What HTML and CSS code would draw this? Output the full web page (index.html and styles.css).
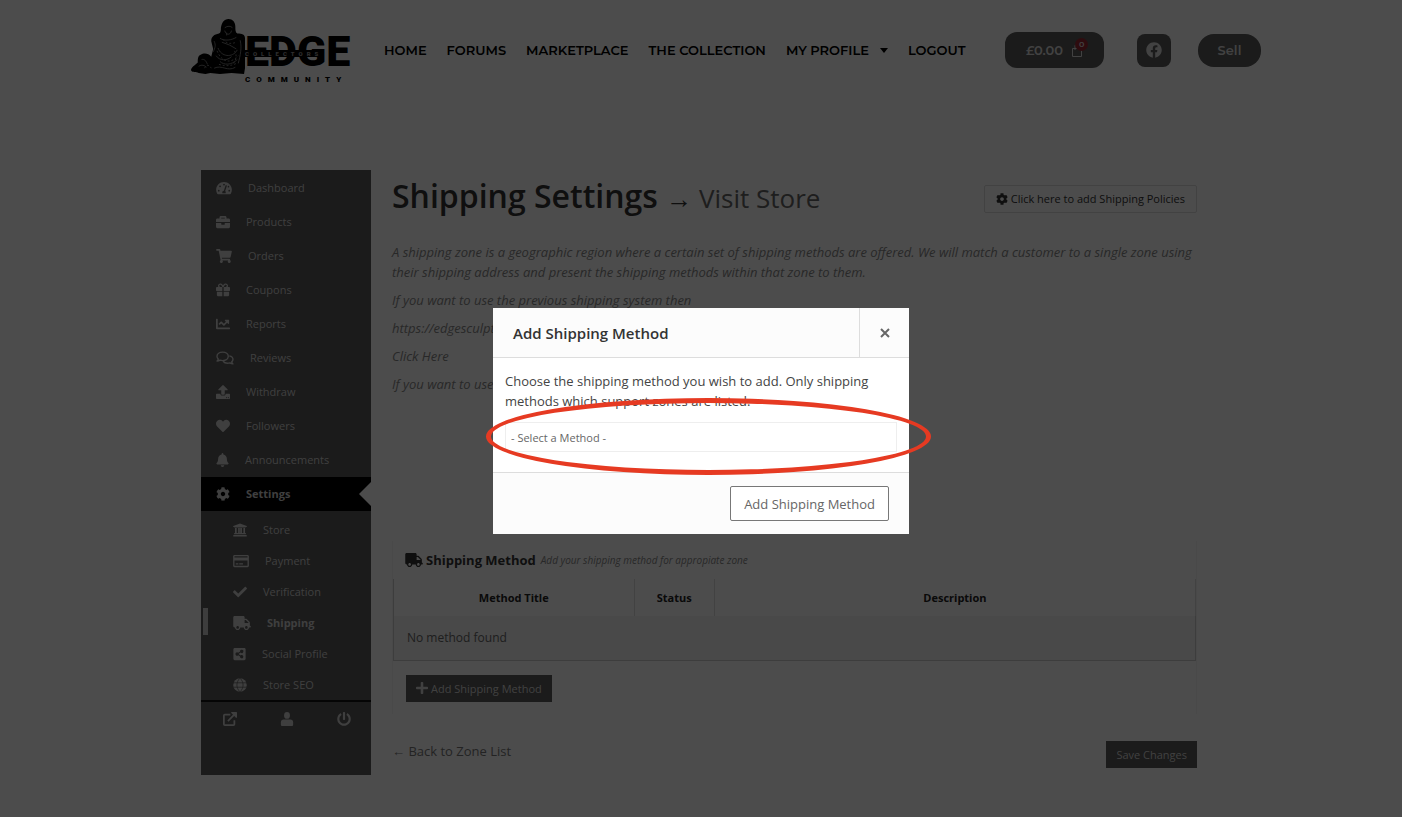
FILE: index.html
```html
<!DOCTYPE html>
<html lang="en">
  <head>
    <meta charset="UTF-8" />
    <meta name="viewport" content="width=device-width, initial-scale=1.0" />
    <link rel="stylesheet" href="styles.css">
    <title>Shipping Settings</title>
  </head>
  <body>
    <!-- icon sprite -->
    <svg class="sprite" aria-hidden="true">
      <symbol id="i-dash" viewBox="0 0 576 512"><path fill-rule="evenodd" d="M288 32C129 32 0 161 0 320c0 53 14 102 39 145 6 10 16 15 28 15h442c12 0 22-5 28-15 25-43 39-92 39-145C576 161 447 32 288 32zM288 96a32 32 0 1 1 0 64 32 32 0 0 1 0-64zM96 384a32 32 0 1 1 0-64 32 32 0 0 1 0 64zM144 224a32 32 0 1 1 0-64 32 32 0 0 1 0 64zM391 185l-61 184c13 12 22 28 22 47 0 12-3 23-9 32H233c-6-9-9-20-9-32 0-34 27-61 60-63l61-184c4-12 18-19 30-15s20 18 16 31zM420 222l15-45a32 32 0 1 1-15 45zM480 384a32 32 0 1 1 0-64 32 32 0 0 1 0 64z"/></symbol>
      <symbol id="i-case" viewBox="0 0 512 512"><path d="M320 336c0 8.840-7.160 16-16 16h-96c-8.840 0-16-7.160-16-16v-48H0v144c0 25.600 22.400 48 48 48h416c25.600 0 48-22.400 48-48V288H320v48zm144-208h-80V80c0-25.600-22.400-48-48-48H176c-25.600 0-48 22.400-48 48v48H48c-25.600 0-48 22.400-48 48v80h512v-80c0-25.600-22.400-48-48-48zm-144 0H192V96h128v32z"/></symbol>
      <symbol id="i-cart" viewBox="0 0 576 512"><path d="M528.120 301.319l47.273-208C578.806 78.301 567.391 64 551.990 64H159.208l-9.166-44.810C147.758 8.021 137.930 0 126.529 0H24C10.745 0 0 10.745 0 24v16c0 13.255 10.745 24 24 24h69.883l70.248 343.435C147.325 417.100 136 435.222 136 456c0 30.928 25.072 56 56 56s56-25.072 56-56c0-15.674-6.447-29.835-16.824-40h209.647C430.447 426.165 424 440.326 424 456c0 30.928 25.072 56 56 56s56-25.072 56-56c0-22.172-12.888-41.332-31.579-50.405l5.517-24.276c3.413-15.018-8.002-29.319-23.403-29.319H218.117l-6.545-32h293.145c11.206 0 20.920-7.754 23.403-18.681z"/></symbol>
      <symbol id="i-gift" viewBox="0 0 512 512"><path fill-rule="evenodd" d="M32 448c0 18 14 32 32 32h168V320H32zM280 480h168c18 0 32-14 32-32V320H280zM480 144h-50c7-12 10-25 10-40 0-48-38-88-86-88-41 0-68 21-98 62-30-41-57-62-98-62-48 0-86 40-86 88 0 15 3 28 10 40H32c-18 0-32 14-32 32v96c0 9 7 16 16 16h216V144h48v144h216c9 0 16-7 16-16v-96c0-18-14-32-32-32zM158 144a40 40 0 0 1 0-80c20 0 33 3 74 80zM354 144h-74c41-77 53-80 74-80a40 40 0 0 1 0 80z"/></symbol>
      <symbol id="i-chart" viewBox="0 0 512 512"><path d="M496 384H64V80c0-8.840-7.160-16-16-16H16C7.160 64 0 71.160 0 80v336c0 17.670 14.330 32 32 32h464c8.840 0 16-7.160 16-16v-32c0-8.840-7.160-16-16-16zM464 96H345.940c-21.380 0-32.090 25.850-16.970 40.970l32.400 32.400L288 242.750l-73.370-73.370c-12.500-12.500-32.760-12.500-45.250 0l-68.690 68.690c-6.250 6.250-6.250 16.380 0 22.630l22.620 22.620c6.250 6.250 16.380 6.250 22.630 0L192 237.250l73.370 73.370c12.500 12.500 32.760 12.500 45.250 0l96-96 32.400 32.400c15.120 15.120 40.970 4.410 40.970-16.970V112c0-8.840-7.150-16-15.990-16z"/></symbol>
      <symbol id="i-chat" viewBox="0 0 640 512"><g fill="none" stroke="currentColor" stroke-width="50" stroke-linejoin="round"><path d="M235 40c-115 0-208 65-208 155 0 40 18 74 46 100-6 28-22 52-44 74 44-2 82-16 112-34 30 10 60 15 94 15 115 0 205-68 205-155S350 40 235 40z"/><path d="M478 178c80 18 134 66 134 128 0 36-18 68-46 92 6 30 22 52 44 74-46-2-82-16-112-36-110 24-204-4-248-62"/></g></symbol>
      <symbol id="i-up" viewBox="0 0 512 512"><path fill-rule="evenodd" d="M296 352h-80c-13 0-24-11-24-24V192h-88c-18 0-27-22-14-34L242 6c7-8 20-8 28 0l152 152c12 12 3 34-14 34h-88v136c0 13-11 24-24 24zM512 344v144c0 13-11 24-24 24H24c-13 0-24-11-24-24V344c0-13 11-24 24-24h136v8c0 31 25 56 56 56h80c31 0 56-25 56-56v-8h136c13 0 24 11 24 24zM388 440a20 20 0 1 0 0 40 20 20 0 0 0 0-40zM452 440a20 20 0 1 0 0 40 20 20 0 0 0 0-40z"/></symbol>
      <symbol id="i-heart" viewBox="0 0 512 512"><path d="M462.300 62.600C407.500 15.900 326 24.300 275.700 76.200L256 96.500l-19.700-20.300C186.100 24.300 104.500 15.900 49.700 62.600c-62.800 53.600-66.100 149.800-9.900 207.900l193.500 199.800c12.500 12.900 32.800 12.900 45.300 0l193.500-199.800c56.300-58.100 53-154.300-9.800-207.900z"/></symbol>
      <symbol id="i-bell" viewBox="0 0 448 512"><path d="M224 512c35.320 0 63.970-28.650 63.970-64H160.030c0 35.350 28.650 64 63.970 64zm215.390-149.710c-19.320-20.760-55.470-51.990-55.470-154.290 0-77.700-54.480-139.900-127.940-155.160V32c0-17.670-14.320-32-31.980-32s-31.980 14.330-31.980 32v20.840C118.560 68.100 64.080 130.300 64.080 208c0 102.300-36.150 133.530-55.470 154.290-6 6.450-8.660 14.160-8.610 21.710.11 16.400 12.980 32 32.100 32h383.800c19.120 0 32-15.600 32.100-32 .05-7.550-2.610-15.270-8.610-21.710z"/></symbol>
      <symbol id="i-cog" viewBox="0 0 512 512"><path d="M487.400 315.700l-42.600-24.600c4.300-23.200 4.300-47 0-70.200l42.600-24.600c4.900-2.800 7.100-8.600 5.500-14-11.100-35.600-30-67.800-54.700-94.600-3.800-4.100-10-5.100-14.800-2.300L380.800 110c-17.900-15.400-38.500-27.300-60.800-35.100V25.800c0-5.600-3.900-10.500-9.400-11.700-36.700-8.200-74.300-7.800-109.200 0-5.500 1.200-9.400 6.100-9.400 11.700V75c-22.200 7.900-42.800 19.800-60.800 35.100L88.700 85.500c-4.900-2.800-11-1.900-14.800 2.300-24.700 26.700-43.600 58.900-54.700 94.600-1.700 5.400.6 11.200 5.500 14L67.300 221c-4.300 23.200-4.300 47 0 70.200l-42.600 24.600c-4.900 2.800-7.100 8.600-5.500 14 11.100 35.600 30 67.800 54.700 94.600 3.800 4.100 10 5.100 14.800 2.300l42.600-24.600c17.900 15.400 38.500 27.300 60.800 35.100v49.200c0 5.600 3.900 10.500 9.400 11.700 36.700 8.200 74.300 7.800 109.200 0 5.500-1.200 9.400-6.100 9.400-11.700v-49.200c22.200-7.900 42.800-19.800 60.800-35.100l42.600 24.600c4.900 2.800 11 1.900 14.800-2.300 24.700-26.700 43.600-58.900 54.700-94.600 1.500-5.500-.7-11.300-5.600-14.100zM256 336c-44.100 0-80-35.900-80-80s35.900-80 80-80 80 35.900 80 80-35.900 80-80 80z"/></symbol>
      <symbol id="i-bank" viewBox="0 0 512 512"><path d="M256 16L8 112v32h32c0 9 8 16 18 16h396c10 0 18-7 18-16h32v-32zM72 184v184H56c-10 0-18 8-18 18v28h436v-28c0-10-8-18-18-18h-16V184h-60v184h-52V184h-64v184h-16V184h-60v184h-52V184zM24 440c-10 0-16 8-16 18v38h496v-38c0-10-6-18-16-18z"/></symbol>
      <symbol id="i-card" viewBox="0 0 576 512"><path fill-rule="evenodd" d="M48 32h480c26 0 48 22 48 48v352c0 26-22 48-48 48H48c-26 0-48-22-48-48V80c0-26 22-48 48-48zM50 80v52h476V80zM50 236v196h476V236zM96 336h96v48H96zM224 336h136v48H224z"/></symbol>
      <symbol id="i-check" viewBox="0 0 512 512"><path d="M173.898 439.404l-166.400-166.400c-9.997-9.997-9.997-26.206 0-36.204l36.203-36.204c9.997-9.998 26.207-9.998 36.204 0L192 312.690 432.095 72.596c9.997-9.997 26.207-9.997 36.204 0l36.203 36.204c9.997 9.997 9.997 26.206 0 36.204l-294.400 294.401c-9.998 9.997-26.207 9.997-36.204-.001z"/></symbol>
      <symbol id="i-truck" viewBox="0 0 640 512"><path d="M624 352h-16V243.900c0-12.700-5.100-24.900-14.100-33.900L494 110.100c-9-9-21.200-14.100-33.900-14.100H416V48c0-26.500-21.500-48-48-48H48C21.500 0 0 21.500 0 48v320c0 26.500 21.500 48 48 48h16c0 53 43 96 96 96s96-43 96-96h128c0 53 43 96 96 96s96-43 96-96h48c8.800 0 16-7.200 16-16v-32c0-8.800-7.200-16-16-16zM160 464c-26.500 0-48-21.500-48-48s21.500-48 48-48 48 21.500 48 48-21.500 48-48 48zm320 0c-26.500 0-48-21.500-48-48s21.500-48 48-48 48 21.500 48 48-21.500 48-48 48zm80-208H416V144h44.100l99.900 99.900V256z"/></symbol>
      <symbol id="i-share" viewBox="0 0 448 512"><path fill-rule="evenodd" d="M48 32h352c26 0 48 22 48 48v352c0 26-22 48-48 48H48c-26 0-48-22-48-48V80c0-26 22-48 48-48zM304 296c-15 0-28 5-38 13l-69-43c2-7 2-13 0-20l69-43a60 60 0 1 0-20-34l-69 43a60 60 0 1 0 0 88l69 43a60 60 0 1 0 58-47z"/></symbol>
      <symbol id="i-globe" viewBox="0 0 512 512"><circle cx="256" cy="256" r="248"/><path fill="none" stroke="#5a5a5a" stroke-width="26" d="M8 176h496M8 336h496M256 8c-150 130-150 366 0 496M256 8c150 130 150 366 0 496"/></symbol>
      <symbol id="i-ext" viewBox="0 0 512 512"><path fill="none" stroke="currentColor" stroke-width="64" stroke-linejoin="round" d="M270 96H64c-18 0-32 14-32 32v320c0 18 14 32 32 32h320c18 0 32-14 32-32V300M180 330L420 90"/><path d="M320 0h170c12 0 22 10 22 22v170c0 20-24 30-38 16L304 38C290 24 300 0 320 0z"/></symbol>
      <symbol id="i-user" viewBox="0 0 448 512"><ellipse cx="224" cy="124" rx="108" ry="122"/><path d="M96 276h256c53 0 96 43 96 96v92c0 26-22 48-48 48H48c-26 0-48-22-48-48v-92c0-53 43-96 96-96z"/></symbol>
      <symbol id="i-power" viewBox="0 0 512 512"><path d="M400 54.100c63 45 104 118.600 104 201.900 0 136.800-110.800 247.700-247.500 248C120 504.300 8.200 393 8 256.400 7.900 173.100 48.900 99.300 111.800 54.200c11.700-8.300 28-4.800 35 7.700L162.600 90c5.900 10.500 3.100 23.800-6.600 31-41.500 30.800-68 79.600-68 134.900-.1 92.300 74.500 168.100 168 168.100 91.600 0 168.600-74.200 168-169.100-.3-51.800-24.700-101.800-68.100-134-9.700-7.200-12.400-20.500-6.500-30.900l15.800-28.100c7-12.400 23.200-16.100 34.800-7.800zM296 264V24c0-13.300-10.700-24-24-24h-32c-13.300 0-24 10.700-24 24v240c0 13.300 10.700 24 24 24h32c13.300 0 24-10.700 24-24z"/></symbol>
      <symbol id="i-plus" viewBox="0 0 448 512"><path d="M416 208H272V64c0-18-14-32-32-32h-32c-18 0-32 14-32 32v144H32c-18 0-32 14-32 32v32c0 18 14 32 32 32h144v144c0 18 14 32 32 32h32c18 0 32-14 32-32V304h144c18 0 32-14 32-32v-32c0-18-14-32-32-32z"/></symbol>
      <symbol id="i-fb" viewBox="0 0 512 512"><path d="M504 256C504 119 393 8 256 8S8 119 8 256c0 123.780 90.690 226.380 209.250 245V327.690h-63V256h63v-54.640c0-62.150 37-96.480 93.670-96.480 27.140 0 55.520 4.840 55.520 4.840v61h-31.280c-30.800 0-40.410 19.120-40.410 38.730V256h68.780l-11 71.690h-57.780V501C413.310 482.380 504 379.780 504 256z"/></symbol>
    </svg>

    <header class="header">
      <a href="#" class="logo">
        <svg class="logo-ape" viewBox="0 0 56 58" aria-hidden="true">
          <path d="M39 0c-5 0-7 4-8 9 0 3 0 5-2 6-5 1-8 3-8 8l2 8-2 8c-3-4-8-4-11-2-3 1-3 5-3 8-3 3-7 5-7 8 2 3 5 1 8 3l7 1 5-1 10 1 12-1 13 1 1-6V20c0-4-3-5-8-5-2-1-2-4-2-7 0-5-3-8-7-8z"/>
          <g fill="none" stroke="#7c7c7c" stroke-width="1">
            <path d="M35 9c3-2 6-2 8 0M35 12c1 5 6 5 7 0M37 14v3M30 20c5 3 12 2 17-1M32 24l8 3 7 4M28 30c3 9 15 11 20 2M26 38c4 6 12 5 16 1M30 44c4 4 12 4 18-2M24 51c8-4 14 4 22-1M11 42c3-1 5 2 6 5M8 49c3-2 6-1 8 1M24 23c2 4 1 7-1 11M51 22c2 8 0 16-2 24"/>
            <path stroke-dasharray="2 2" d="M27 33c5 12 14 14 22 5M33 21c4 5 9 5 14 3M29 47c6 2 12 2 18-1M14 51c2-4 5-4 7 0M45 33c3 4 2 9-1 13"/>
          </g>
        </svg>
        <span class="logo-name">
          <span class="logo-edge">EDGE</span>
          <span class="logo-strip">COLLECTORS</span>
          <span class="logo-sub">COMMUNITY</span>
        </span>
      </a>
      <nav class="nav">
        <a href="#">HOME</a>
        <a href="#">FORUMS</a>
        <a href="#">MARKETPLACE</a>
        <a href="#">THE COLLECTION</a>
        <a href="#" class="has-sub">MY PROFILE</a>
        <a href="#">LOGOUT</a>
      </nav>
      <div class="actions">
        <a href="#" class="cart">£0.00
          <span class="bag">
            <svg viewBox="0 0 12 16" aria-hidden="true"><path fill="none" stroke="currentColor" d="M1.500 6.500h9v8h-9zM4 8V4a2 2 0 0 1 4 0v4"/></svg>
            <span class="badge">0</span>
          </span>
        </a>
        <a href="#" class="fb" aria-label="Facebook"><svg class="icon"><use href="#i-fb"/></svg></a>
        <a href="#" class="sell">Sell</a>
      </div>
    </header>

    <div class="page">
      <aside class="sidebar">
        <ul class="menu">
          <li><a href="#"><svg class="icon wide"><use href="#i-dash"/></svg>Dashboard</a></li>
          <li><a href="#"><svg class="icon"><use href="#i-case"/></svg>Products</a></li>
          <li><a href="#"><svg class="icon wide"><use href="#i-cart"/></svg>Orders</a></li>
          <li><a href="#"><svg class="icon"><use href="#i-gift"/></svg>Coupons</a></li>
          <li><a href="#"><svg class="icon"><use href="#i-chart"/></svg>Reports</a></li>
          <li><a href="#"><svg class="icon wider"><use href="#i-chat"/></svg>Reviews</a></li>
          <li><a href="#"><svg class="icon"><use href="#i-up"/></svg>Withdraw</a></li>
          <li><a href="#"><svg class="icon"><use href="#i-heart"/></svg>Followers</a></li>
          <li><a href="#"><svg class="icon slim"><use href="#i-bell"/></svg>Announcements</a></li>
          <li class="active"><a href="#"><svg class="icon"><use href="#i-cog"/></svg>Settings</a></li>
        </ul>
        <ul class="menu submenu">
          <li><a href="#"><svg class="icon"><use href="#i-bank"/></svg>Store</a></li>
          <li><a href="#"><svg class="icon wide"><use href="#i-card"/></svg>Payment</a></li>
          <li><a href="#"><svg class="icon"><use href="#i-check"/></svg>Verification</a></li>
          <li class="current"><a href="#"><svg class="icon wider"><use href="#i-truck"/></svg>Shipping</a></li>
          <li><a href="#"><svg class="icon slim"><use href="#i-share"/></svg>Social Profile</a></li>
          <li><a href="#"><svg class="icon"><use href="#i-globe"/></svg>Store SEO</a></li>
        </ul>
        <div class="quick">
          <a href="#" aria-label="Visit store"><svg class="icon"><use href="#i-ext"/></svg></a>
          <a href="#" aria-label="Edit account"><svg class="icon"><use href="#i-user"/></svg></a>
          <a href="#" aria-label="Log out"><svg class="icon"><use href="#i-power"/></svg></a>
        </div>
      </aside>

      <main class="content">
        <div class="title-row">
          <h1>Shipping Settings <small>→ <a href="#">Visit Store</a></small></h1>
          <a href="#" class="policies"><svg class="icon"><use href="#i-cog"/></svg>Click here to add Shipping Policies</a>
        </div>
        <div class="help">
          <p>A shipping zone is a geographic region where a certain set of shipping methods are offered. We will match a customer to a single zone using their shipping address and present the shipping methods within that zone to them.</p>
          <p>If you want to use the previous shipping system then</p>
          <p>https://edgesculpture.com</p>
          <p><a href="#">Click Here</a></p>
          <p>If you want to use zones</p>
        </div>

        <section class="methods">
          <h2><svg class="icon wider"><use href="#i-truck"/></svg>Shipping Method <em>Add your shipping method for appropiate zone</em></h2>
          <table>
            <thead>
              <tr><th class="c-title">Method Title</th><th class="c-status">Status</th><th>Description</th></tr>
            </thead>
            <tbody>
              <tr><td colspan="3">No method found</td></tr>
            </tbody>
          </table>
          <button type="button" class="btn add"><svg class="icon"><use href="#i-plus"/></svg>Add Shipping Method</button>
        </section>

        <div class="bottom">
          <a href="#">← Back to Zone List</a>
          <button type="button" class="btn">Save Changes</button>
        </div>
      </main>
    </div>

    <div class="backdrop">
      <div class="modal" role="dialog" aria-labelledby="modal-title">
        <div class="modal-head">
          <h2 id="modal-title">Add Shipping Method</h2>
          <button type="button" class="close" aria-label="Close"><svg viewBox="0 0 10 10" aria-hidden="true"><path d="M1 1l8 8M9 1l-8 8"/></svg></button>
        </div>
        <div class="modal-body">
          <label for="method">Choose the shipping method you wish to add. Only shipping methods which support zones are listed.</label>
          <select id="method">
            <option>- Select a Method -</option>
          </select>
        </div>
        <div class="modal-foot">
          <button type="button">Add Shipping Method</button>
        </div>
        <div class="ring"></div>
      </div>
    </div>
  </body>
</html>
```

FILE: styles.css
```css
* {
  box-sizing: border-box;
}
body {
  margin: 0;
  background-color: #fff;
  color: #333;
  font-family: 'Segoe UI', 'Open Sans', 'Noto Sans', sans-serif;
  font-size: 13px;
  line-height: 20px;
}
a {
  color: inherit;
  text-decoration: none;
}
button,
select {
  font-family: inherit;
}
.sprite {
  display: none;
}
.icon {
  width: 14px;
  height: 14px;
  fill: currentColor;
  flex: none;
}
.icon.slim {
  width: 13px;
}
.icon.wide {
  width: 16px;
}
.icon.wider {
  width: 18px;
}

/* header */
.header {
  display: flex;
  align-items: center;
  height: 100px;
  padding: 0 141px 0 191px;
  font-family: Montserrat, Inter, sans-serif;
  font-weight: 600;
}
.logo {
  display: flex;
  align-items: flex-start;
  width: 159px;
  height: 64px;
  margin-right: 34px;
  color: #000;
  flex: none;
}
.logo-ape {
  width: 54px;
  height: 58px;
  flex: none;
}
.logo-name {
  position: relative;
  display: flex;
  flex-direction: column;
  padding-top: 8px;
  font-family: Roboto, 'Liberation Sans', sans-serif;
  font-weight: 900;
}
.logo-edge {
  font-size: 43px;
  line-height: 50px;
}
.logo-strip {
  position: absolute;
  top: 32px;
  left: 0;
  background-color: #000;
  color: #999;
  font-size: 6px;
  line-height: 7px;
  letter-spacing: 4px;
}
.logo-sub {
  font-size: 8px;
  line-height: 8px;
  letter-spacing: 6px;
}
.nav {
  display: flex;
  gap: 20px;
  color: #000;
  font-size: 13px;
  white-space: nowrap;
}
.has-sub {
  display: flex;
  align-items: center;
  gap: 11px;
}
.has-sub::after {
  content: '';
  border: 4px solid transparent;
  border-top: 5px solid #000;
  border-bottom: 0;
}
.actions {
  display: flex;
  align-items: center;
  margin-left: auto;
  color: #ddd;
}
.cart,
.fb,
.sell {
  display: flex;
  align-items: center;
  justify-content: center;
  background-color: #5a5a5a;
}
.cart {
  gap: 8px;
  width: 99px;
  height: 36px;
  border-radius: 12px;
}
.bag {
  position: relative;
  height: 16px;
}
.bag svg {
  display: block;
  width: 12px;
  height: 16px;
}
.badge {
  position: absolute;
  top: -4px;
  left: 4px;
  width: 13px;
  height: 13px;
  border-radius: 50%;
  background-color: #9c2b35;
  font-size: 8px;
  line-height: 13px;
  text-align: center;
}
.fb {
  width: 34px;
  height: 33px;
  margin: 0 27px 0 33px;
  border-radius: 8px;
}
.fb .icon {
  width: 16px;
  height: 16px;
}
.sell {
  width: 63px;
  height: 33px;
  border-radius: 16px;
}

/* layout */
.page {
  display: flex;
  gap: 21px;
  padding: 70px 205px 42px 201px;
}
.sidebar {
  width: 170px;
  min-height: 605px;
  padding-top: 1px;
  background-color: #5a5a5a;
  color: #d2d2d2;
  font-size: 11px;
  flex: none;
}
.menu {
  list-style: none;
  margin: 0;
  padding: 0;
}
.menu a {
  display: flex;
  align-items: center;
  gap: 16px;
  height: 34px;
  padding-left: 15px;
}
.menu .active {
  position: relative;
  background-color: #000;
  font-weight: bold;
}
.active::after {
  content: '';
  position: absolute;
  top: 5px;
  right: 0;
  border: 12px solid transparent;
  border-right-color: #fff;
  border-left: 0;
}
.submenu {
  padding: 3px 0 0;
  border-bottom: 2px solid #111;
}
.submenu a {
  height: 31px;
  padding-left: 32px;
}
.current {
  position: relative;
  font-weight: bold;
}
.current::before {
  content: '';
  position: absolute;
  top: 1px;
  left: 2px;
  width: 5px;
  height: 27px;
  background-color: #ccc;
}
.quick {
  display: flex;
  justify-content: space-between;
  padding: 10px 20px 0 22px;
}

.content {
  flex: 1;
  min-width: 0;
}
.title-row {
  display: flex;
  align-items: center;
  justify-content: space-between;
  height: 54px;
}
h1 {
  margin: 0;
  color: #333;
  font-size: 32px;
  line-height: 54px;
  font-weight: 600;
}
h1 small {
  font-size: 26px;
  font-weight: 500;
}
h1 small a {
  color: #666;
}
.policies {
  display: flex;
  align-items: center;
  gap: 3px;
  height: 28px;
  padding: 0 11px;
  margin-top: 4px;
  border: 1px solid #ddd;
  border-radius: 2px;
  font-size: 11px;
}
.policies .icon {
  width: 12px;
  height: 12px;
}
.help {
  min-height: 300px;
  padding-top: 18px;
  color: #888;
  font-size: 13px;
  font-style: italic;
}
.help p {
  margin: 0 0 8px;
}

.methods {
  margin-top: 17px;
  padding-bottom: 12px;
  border: 1px solid #f6f6f6;
  border-width: 0 1px;
}
.methods h2 {
  display: flex;
  align-items: center;
  gap: 3px;
  height: 38px;
  margin: 0;
  padding-left: 12px;
  font-size: 13px;
}
.methods em {
  margin-left: 2px;
  color: #888;
  font-size: 10px;
  font-weight: normal;
}
table {
  width: 100%;
  border: 1px solid #ccc;
  border-top: 0;
  border-collapse: collapse;
  font-size: 11px;
}
th {
  height: 37px;
  padding: 0;
  border-right: 1px solid #ddd;
  color: #222;
}
.c-title {
  width: 30%;
}
.c-status {
  width: 10%;
}
td {
  height: 44px;
  padding: 0 13px;
  background-color: #f3f3f3;
  color: #666;
  font-size: 12px;
}
.btn {
  height: 27px;
  padding: 0 10px;
  border: 0;
  background-color: #5a5a5a;
  color: #d8d8d8;
  font-size: 11px;
}
.add {
  display: flex;
  align-items: center;
  gap: 3px;
  margin: 14px 0 0 13px;
}
.add .icon {
  width: 12px;
}
.bottom {
  display: flex;
  align-items: flex-start;
  justify-content: space-between;
  margin-top: 27px;
  color: #777;
}

/* modal */
.backdrop {
  position: fixed;
  top: 0;
  right: 0;
  bottom: 0;
  left: 0;
  display: flex;
  align-items: flex-start;
  justify-content: center;
  padding-top: 308px;
  background-color: rgba(0, 0, 0, 0.7);
}
.modal {
  position: relative;
  width: 416px;
  background-color: #fff;
}
.modal-head {
  display: flex;
  height: 50px;
  border-bottom: 1px solid #ddd;
  background-color: #fcfcfc;
}
.modal-head h2 {
  flex: 1;
  margin: 0;
  padding-left: 20px;
  font-size: 15px;
  font-weight: 600;
  line-height: 50px;
}
.close {
  width: 50px;
  border: 0;
  border-left: 1px solid #ddd;
  background: none;
}
.close svg {
  width: 10px;
  height: 10px;
  stroke: #666;
  stroke-width: 2;
}
.modal-body {
  padding: 13px 12px 20px;
}
.modal-body label {
  display: block;
  margin-bottom: 11px;
  color: #444;
}
.modal-body select {
  appearance: none;
  display: block;
  width: 100%;
  height: 30px;
  padding: 0 5px;
  border: 1px solid #eee;
  background-color: #fff;
  color: #666;
  font-size: 11px;
}
.modal-foot {
  display: flex;
  justify-content: flex-end;
  padding: 13px 20px;
  border-top: 1px solid #ddd;
  background-color: #fcfcfc;
}
.modal-foot button {
  height: 35px;
  padding: 0 13px;
  border: 1px solid #777;
  border-radius: 2px;
  background-color: #fff;
  color: #666;
  font-size: 13px;
}
/* highlight around the select */
.ring {
  position: absolute;
  top: 90px;
  left: -7px;
  right: -22px;
  height: 77px;
  border: 5px solid #e63a22;
  border-radius: 50%;
  pointer-events: none;
}
```
